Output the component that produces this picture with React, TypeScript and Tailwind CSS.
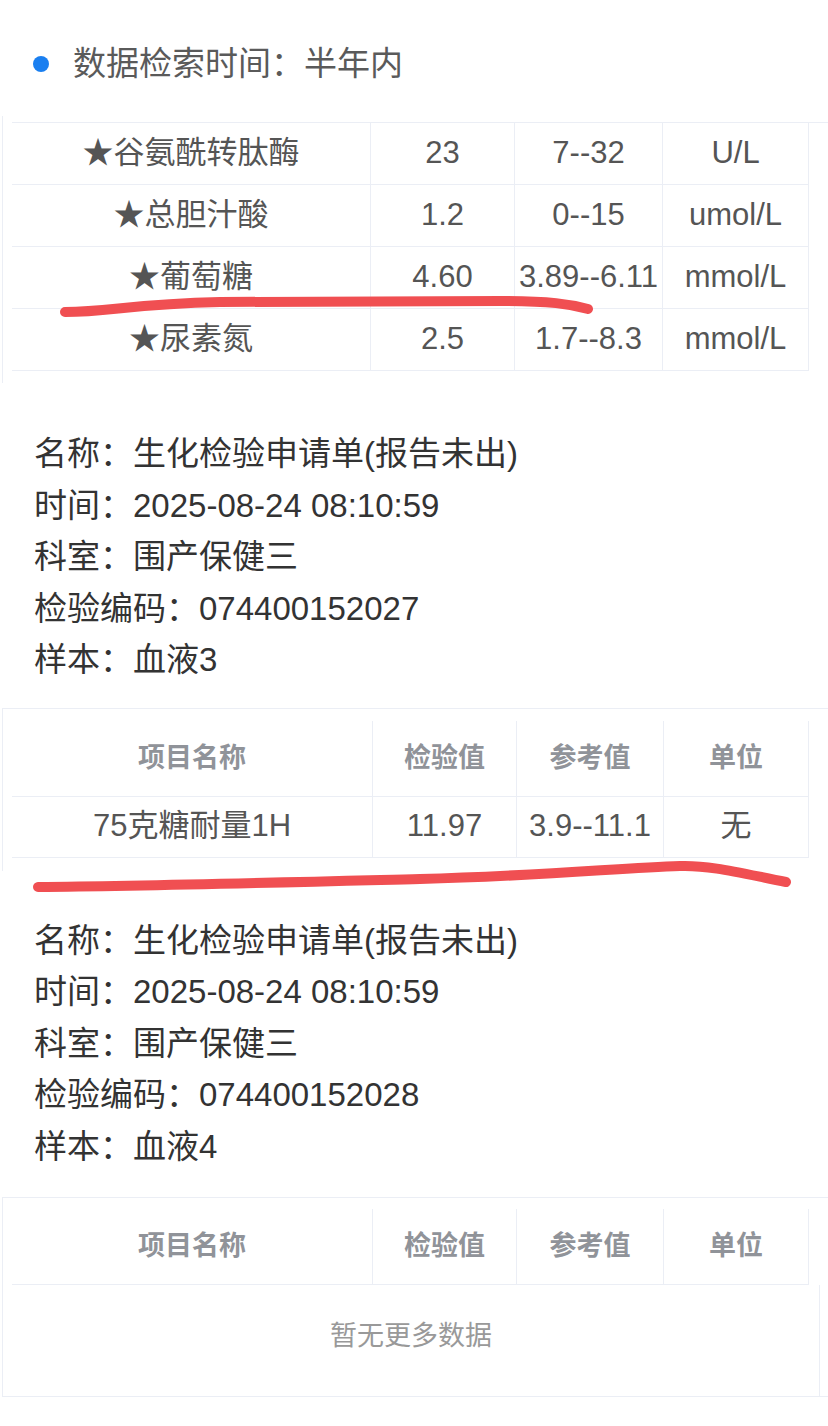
import React from "react";

type Row = [string, string, string, string];

const firstRows: Row[] = [
  ["★谷氨酰转肽酶", "23", "7--32", "U/L"],
  ["★总胆汁酸", "1.2", "0--15", "umol/L"],
  ["★葡萄糖", "4.60", "3.89--6.11", "mmol/L"],
  ["★尿素氮", "2.5", "1.7--8.3", "mmol/L"],
];

const heads: Row = ["项目名称", "检验值", "参考值", "单位"];

function InfoBlock({ code, sample }: { code: string; sample: string }) {
  return (
    <div className="pl-[34px] text-[33px] leading-[51.5px] text-[#333]">
      <div>名称：生化检验申请单(报告未出)</div>
      <div>时间：2025-08-24 08:10:59</div>
      <div>科室：围产保健三</div>
      <div>检验编码：{code}</div>
      <div>样本：{sample}</div>
    </div>
  );
}

function HeadRow() {
  return (
    <div className="grid grid-cols-[361px_144px_147px_145px]">
      {heads.map((h) => (
        <div
          key={h}
          className="flex h-[76px] items-center justify-center border-r border-b border-[#ebeef5] text-[27px] font-semibold text-[#909399]"
        >
          {h}
        </div>
      ))}
    </div>
  );
}

export default function App() {
  return (
    <div className="relative h-[1426px] w-[828px] overflow-hidden bg-white font-['Liberation_Sans','Noto_Sans_CJK_SC',sans-serif]">
      {/* 检索时间 */}
      <div className="mt-[44px] flex h-[40px] items-center pl-[33px]">
        <span className="h-4 w-4 rounded-full bg-[#1a7ff0]" />
        <span className="ml-[24px] text-[33px] text-[#5a5a5a]">数据检索时间：半年内</span>
      </div>

      {/* 第一张表（已滚动） */}
      <div className="ml-[2px] mt-[32px] border-l border-[#ebeef5] pl-[9px] pt-[6px] pb-[12px]">
        <div className="grid grid-cols-[359px_144px_148px_146px] border-t border-[#ebeef5]">
          {firstRows.map((r) =>
            r.map((c, i) => (
              <div
                key={r[0] + i}
                className="flex h-[62px] items-center justify-center whitespace-nowrap border-r border-b border-[#ebeef5] text-[31px] text-[#555]"
              >
                {c}
              </div>
            ))
          )}
        </div>
      </div>

      <div className="mt-[45px]">
        <InfoBlock code="074400152027" sample="血液3" />
      </div>

      {/* 第二张表 */}
      <div className="ml-[2px] mt-[22px] border-t border-l border-[#ebeef5] pl-[9px] pt-[12px] pb-[13px]">
        <HeadRow />
        <div className="grid grid-cols-[361px_144px_147px_145px]">
          {["75克糖耐量1H", "11.97", "3.9--11.1", "无"].map((c) => (
            <div
              key={c}
              className="flex h-[61px] items-center justify-center whitespace-nowrap border-r border-b border-[#ebeef5] text-[31px] text-[#555]"
            >
              {c}
            </div>
          ))}
        </div>
      </div>

      <div className="mt-[44px]">
        <InfoBlock code="074400152028" sample="血液4" />
      </div>

      {/* 第三张表：无数据 */}
      <div className="ml-[2px] mt-[25px] border-t border-l border-b border-[#ebeef5] pt-[11px]">
        <div className="pl-[9px]">
          <HeadRow />
        </div>
        <div className="flex h-[111px] w-[817px] items-center justify-center border-r border-[#ebeef5] pb-[8px] text-[27px] text-[#999]">
          暂无更多数据
        </div>
      </div>

      {/* 红色手绘标记 */}
      <svg className="pointer-events-none absolute inset-0" width="828" height="1426" fill="none">
        <path
          d="M65 312 C110 312 130 304 220 302 L500 301 C550 301 570 304 588 309"
          stroke="#f04f52"
          strokeWidth="10"
          strokeLinecap="round"
        />
        <path
          d="M38 887 C150 886 300 882 420 879 S620 868 680 866 C710 865 740 873 786 882"
          stroke="#f04f52"
          strokeWidth="10"
          strokeLinecap="round"
        />
      </svg>
    </div>
  );
}
